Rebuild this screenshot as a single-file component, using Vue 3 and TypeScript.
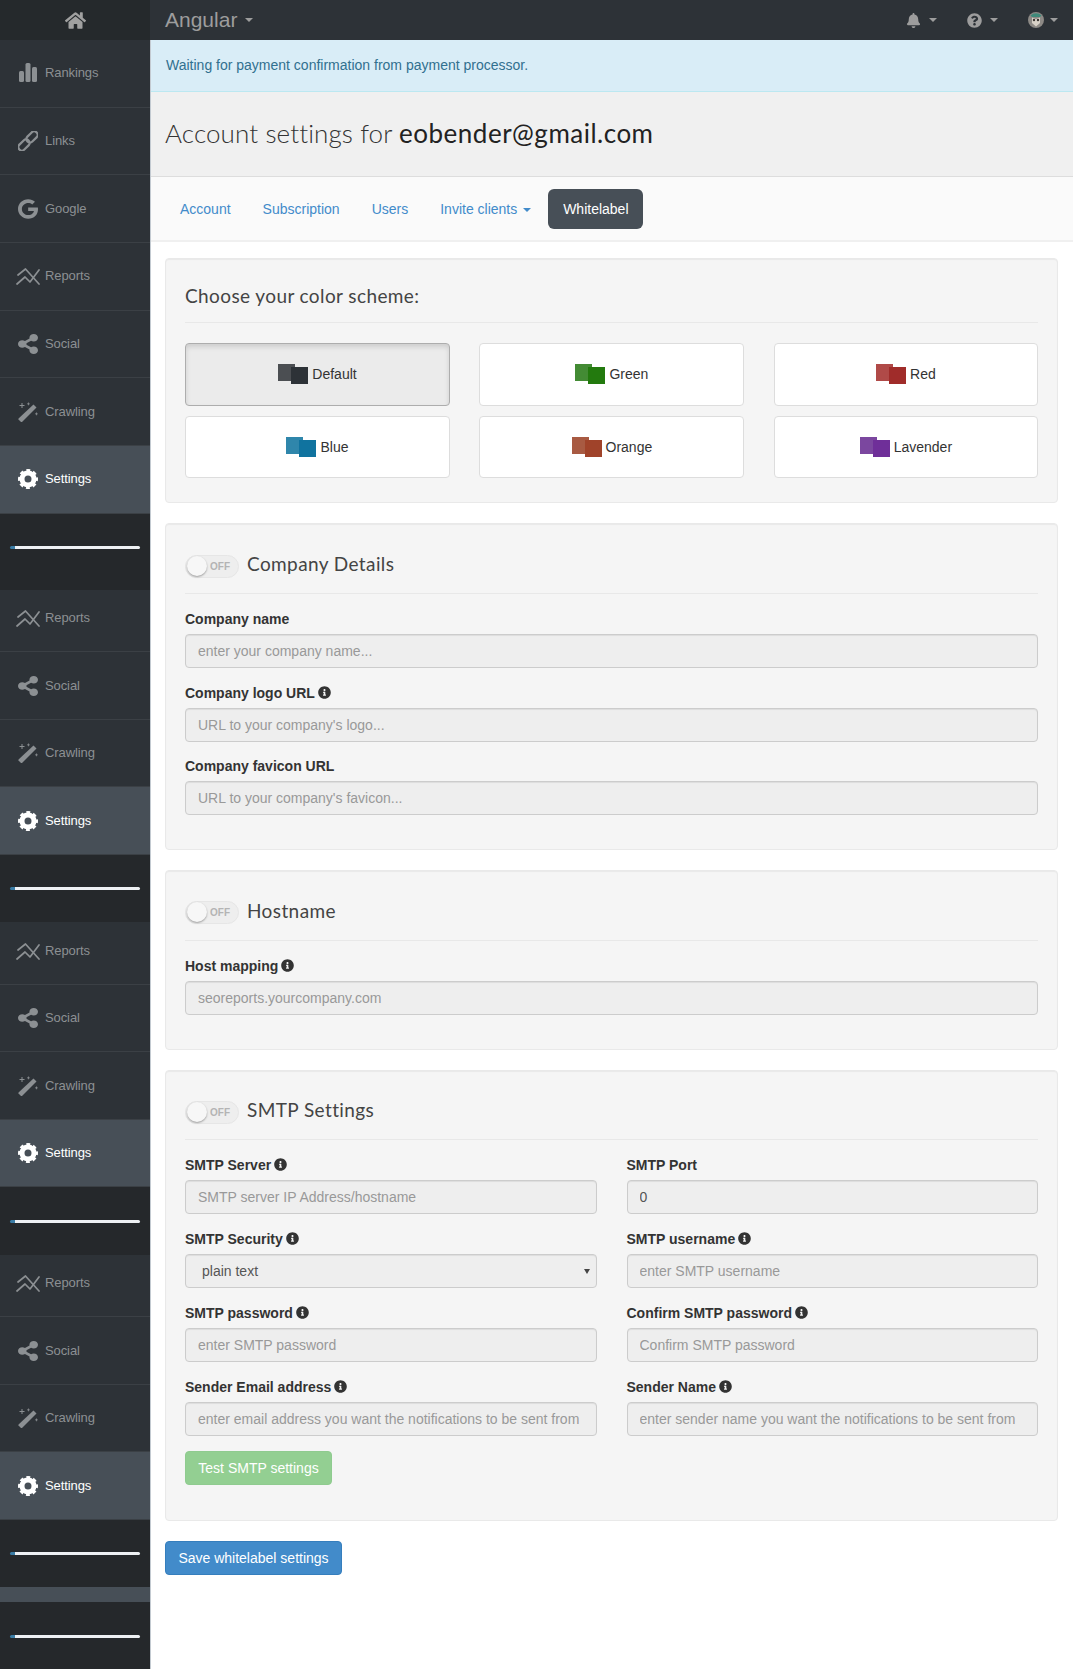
<script setup lang="ts">
const navTop = [
  { label: 'Rankings', icon: 'bars', h: 'tall' },
  { label: 'Links', icon: 'link', h: 'tall' },
  { label: 'Google', icon: 'google', h: 'tall' },
  { label: 'Reports', icon: 'reports', h: 'tall' },
]

// the sidebar repeats this block four times in the screenshot
const repeated = [
  { label: 'Reports', icon: 'reports', h: 'short' },
  { label: 'Social', icon: 'social', h: 'tall' },
  { label: 'Crawling', icon: 'wand', h: 'tall' },
  { label: 'Settings', icon: 'cog', h: 'tall' },
]

const tabs = ['Account', 'Subscription', 'Users']

const schemes = [
  { name: 'Default', a: '#4b4e52', b: '#2d3237', on: true },
  { name: 'Green', a: '#438b34', b: '#237a0e', on: false },
  { name: 'Red', a: '#b04a48', b: '#a02c2a', on: false },
  { name: 'Blue', a: '#2f86ab', b: '#10739f', on: false },
  { name: 'Orange', a: '#a85a42', b: '#a0432a', on: false },
  { name: 'Lavender', a: '#7b479f', b: '#6f2f99', on: false },
]

const company = [
  { label: 'Company name', ph: 'enter your company name...', info: false },
  { label: 'Company logo URL', ph: "URL to your company's logo...", info: true },
  { label: 'Company favicon URL', ph: "URL to your company's favicon...", info: false },
]

const smtp = [
  { label: 'SMTP Server', ph: 'SMTP server IP Address/hostname', info: true },
  { label: 'SMTP Port', val: '0', info: false },
  { label: 'SMTP Security', select: true, info: true },
  { label: 'SMTP username', ph: 'enter SMTP username', info: true },
  { label: 'SMTP password', ph: 'enter SMTP password', info: true },
  { label: 'Confirm SMTP password', ph: 'Confirm SMTP password', info: true },
  { label: 'Sender Email address', ph: 'enter email address you want the notifications to be sent from', info: true },
  { label: 'Sender Name', ph: 'enter sender name you want the notifications to be sent from', info: true },
]

const infoPath =
  'M256 8C119.043 8 8 119.083 8 256c0 136.997 111.043 248 248 248s248-111.003 248-248C504 119.083 392.957 8 256 8zm0 110c23.196 0 42 18.804 42 42s-18.804 42-42 42-42-18.804-42-42 18.804-42 42-42zm56 254c0 6.627-5.373 12-12 12h-88c-6.627 0-12-5.373-12-12v-24c0-6.627 5.373-12 12-12h12v-64h-12c-6.627 0-12-5.373-12-12v-24c0-6.627 5.373-12 12-12h64c6.627 0 12 5.373 12 12v100h12c6.627 0 12 5.373 12 12v24z'
</script>

<template>
  <div class="page">
    <header class="topbar">
      <div class="home">
        <svg class="home-icon" viewBox="0 0 576 512">
          <path fill="currentColor" d="M280.37 148.26L96 300.11V464a16 16 0 0 0 16 16l112.06-.29a16 16 0 0 0 15.92-16V368a16 16 0 0 1 16-16h64a16 16 0 0 1 16 16v95.64a16 16 0 0 0 16 16.05L464 480a16 16 0 0 0 16-16V300L295.67 148.26a12.19 12.19 0 0 0-15.3 0zM571.6 251.47L488 182.56V44.05a12 12 0 0 0-12-12h-56a12 12 0 0 0-12 12v72.61L318.47 43a48 48 0 0 0-61 0L4.34 251.47a12 12 0 0 0-1.6 16.9l25.5 31A12 12 0 0 0 45.15 301l235.22-193.74a12.19 12.19 0 0 1 15.3 0L530.9 301a12 12 0 0 0 16.9-1.6l25.5-31a12 12 0 0 0-1.7-16.93z" />
        </svg>
      </div>
      <div class="brand">Angular <i class="caret"></i></div>
      <div class="tools">
        <span class="tool">
          <svg class="tool-icon" viewBox="0 0 448 512"><path fill="currentColor" d="M224 512c35.32 0 63.97-28.65 63.97-64H160.03c0 35.35 28.65 64 63.97 64zm215.39-149.71c-19.32-20.76-55.47-51.99-55.47-154.29 0-77.7-54.48-139.9-127.94-155.16V32c0-17.67-14.32-32-31.98-32s-31.98 14.33-31.98 32v20.84C118.56 68.1 64.08 130.3 64.08 208c0 102.3-36.15 133.53-55.47 154.29-6 6.45-8.66 14.16-8.61 21.71.11 16.4 12.98 32 32.1 32h383.8c19.12 0 32-15.6 32.1-32 .05-7.55-2.61-15.27-8.61-21.71z" /></svg>
          <i class="caret"></i>
        </span>
        <span class="tool">
          <svg class="tool-icon" viewBox="0 0 512 512"><path fill="currentColor" d="M504 256c0 136.997-111.043 248-248 248S8 392.997 8 256C8 119.083 119.043 8 256 8s248 111.083 248 248zM262.655 90c-54.497 0-89.255 22.957-116.549 63.758-3.536 5.286-2.353 12.415 2.715 16.258l34.699 26.31c5.205 3.947 12.621 3.008 16.665-2.122 17.864-22.658 30.113-35.797 57.303-35.797 20.429 0 45.698 13.148 45.698 32.958 0 14.976-12.363 22.667-32.534 33.976C247.128 238.528 216 254.941 216 296v4c0 6.627 5.373 12 12 12h56c6.627 0 12-5.373 12-12v-1.333c0-28.462 83.186-29.647 83.186-106.667 0-58.002-60.165-102-116.531-102zM256 338c-25.365 0-46 20.635-46 46 0 25.364 20.635 46 46 46s46-20.636 46-46c0-25.365-20.635-46-46-46z" /></svg>
          <i class="caret"></i>
        </span>
        <span class="tool">
          <svg class="avatar" viewBox="0 0 16 16">
            <circle cx="8" cy="8" r="8" fill="#8d8a86" />
            <path d="M2.5 3.5a7.6 7.6 0 0 1 11 0L12 5H4z" fill="#3f8a7a" />
            <path d="M4 5.5 8 7l4-1.500V11l-4 3.500L4 11z" fill="#d8d2c8" />
            <circle cx="6" cy="8" r="1.200" fill="#3a3632" />
            <circle cx="10" cy="8" r="1.200" fill="#3a3632" />
          </svg>
          <i class="caret"></i>
        </span>
      </div>
    </header>

    <div class="body">
      <aside class="sidebar">
        <a v-for="item in navTop" :key="item.label" class="side-item first">
          <span class="side-icon">
            <svg v-if="item.icon === 'bars'" viewBox="0 0 20 20"><rect x="1" y="8" width="5" height="11" rx="1.500" fill="currentColor" /><rect x="7.500" y="0" width="5" height="19" rx="1.500" fill="currentColor" /><rect x="14" y="4" width="5" height="15" rx="1.500" fill="currentColor" /></svg>
            <svg v-else-if="item.icon === 'link'" viewBox="0 0 20 20" fill="none" stroke="currentColor" stroke-width="2.200"><rect x="-6.500" y="-3.500" width="13" height="7" rx="3.500" transform="translate(6 14) rotate(-45)" /><rect x="-6.500" y="-3.500" width="13" height="7" rx="3.500" transform="translate(14 6) rotate(-45)" /></svg>
            <svg v-else-if="item.icon === 'google'" viewBox="0 0 488 512" preserveAspectRatio="none"><path fill="currentColor" d="M488 261.800C488 403.300 391.100 504 248 504 110.800 504 0 393.200 0 256S110.800 8 248 8c66.800 0 123 24.500 166.300 64.900l-67.500 64.900C258.500 52.600 94.300 116.600 94.300 256c0 86.500 69.100 156.600 153.700 156.600 98.200 0 135-70.400 140.800-106.900H248v-85.300h236.100c2.300 12.700 3.900 24.900 3.900 41.400z" /></svg>
            <svg v-else class="wide" viewBox="0 0 24 18" fill="none" stroke="currentColor" stroke-width="1.700" stroke-linecap="round" stroke-linejoin="round"><path d="M2 8 9.500 2 23 17" /><path d="M1 17l8-7 5 5 9-12" /></svg>
          </span>
          {{ item.label }}
        </a>

        <template v-for="n in 4" :key="n">
          <a
            v-for="item in repeated"
            :key="item.label"
            class="side-item"
            :class="{ active: item.icon === 'cog', short: item.h === 'short', hide: n === 1 && item.label === 'Reports', first: n === 1 }"
          >
            <span class="side-icon">
              <svg v-if="item.icon === 'reports'" class="wide" viewBox="0 0 24 18" fill="none" stroke="currentColor" stroke-width="1.700" stroke-linecap="round" stroke-linejoin="round"><path d="M2 8 9.500 2 23 17" /><path d="M1 17l8-7 5 5 9-12" /></svg>
              <svg v-else-if="item.icon === 'social'" viewBox="0 0 448 512" preserveAspectRatio="none"><path fill="currentColor" d="M352 320c-22.608 0-43.387 7.819-59.790 20.895l-102.486-64.054a96.551 96.551 0 0 0 0-41.683l102.486-64.054C308.613 184.181 329.392 192 352 192c53.019 0 96-42.981 96-96S405.019 0 352 0s-96 42.981-96 96c0 7.158.79 14.130 2.276 20.841L155.790 180.895C139.387 167.819 118.608 160 96 160c-53.019 0-96 42.981-96 96s42.981 96 96 96c22.608 0 43.387-7.819 59.790-20.895l102.486 64.054A96.301 96.301 0 0 0 256 416c0 53.019 42.981 96 96 96s96-42.981 96-96-42.981-96-96-96z" /></svg>
              <svg v-else-if="item.icon === 'wand'" viewBox="0 0 20 20" fill="currentColor"><path d="M15.500 2.500 18.500 5.500 4 20H3L0.500 17.500V16.500z" /><path d="M3.500 1h1v2h2v1h-2v2h-1V4h-2V3h2zM10 0.500h.8v1h1v.8h-1v1H10v-1H9v-.8h1zM18 10.500h.8v1h1v.8h-1v1H18v-1h-1v-.8h1z" /></svg>
              <svg v-else viewBox="0 0 20 20" fill="none" stroke="currentColor"><circle cx="10" cy="10" r="6" stroke-width="5" /><circle cx="10" cy="10" r="8.600" stroke-width="2.800" stroke-dasharray="3.800 2.955" stroke-dashoffset="1.900" /></svg>
            </span>
            {{ item.label }}
          </a>
          <div class="side-slot"><span class="slot-bar"></span></div>
          <div v-if="n === 1" class="side-gap"></div>
        </template>
        <div class="side-stripe"></div>
        <div class="side-slot"><span class="slot-bar"></span></div>
      </aside>

      <main class="main">
        <div class="alert">Waiting for payment confirmation from payment processor.</div>
        <div class="title-bar">
          <h1>Account settings for <b>eobender@gmail.com</b></h1>
        </div>
        <nav class="tabs">
          <a v-for="t in tabs" :key="t" class="tab">{{ t }}</a>
          <a class="tab">Invite clients <i class="caret blue"></i></a>
          <a class="tab current">Whitelabel</a>
        </nav>

        <div class="content">
          <section class="panel">
            <h3 class="panel-head plain"><span class="head-text">Choose your color scheme:</span></h3>
            <div class="schemes">
              <button v-for="s in schemes" :key="s.name" type="button" class="scheme" :class="{ on: s.on }">
                <span class="swatch">
                  <i :style="{ background: s.a }"></i>
                  <i :style="{ background: s.b }"></i>
                </span>
                {{ s.name }}
              </button>
            </div>
          </section>

          <section class="panel tight">
            <h3 class="panel-head">
              <span class="toggle"><i class="knob"></i><em>OFF</em></span>
              <span class="head-text">Company Details</span>
            </h3>
            <div v-for="f in company" :key="f.label" class="group compact">
              <label>{{ f.label }}
                <svg v-if="f.info" class="info" viewBox="0 0 512 512"><path fill="currentColor" :d="infoPath" /></svg>
              </label>
              <input type="text" disabled :placeholder="f.ph" />
            </div>
          </section>

          <section class="panel">
            <h3 class="panel-head">
              <span class="toggle"><i class="knob"></i><em>OFF</em></span>
              <span class="head-text">Hostname</span>
            </h3>
            <div class="group">
              <label>Host mapping
                <svg class="info" viewBox="0 0 512 512"><path fill="currentColor" :d="infoPath" /></svg>
              </label>
              <input type="text" disabled placeholder="seoreports.yourcompany.com" />
            </div>
          </section>

          <section class="panel smtp">
            <h3 class="panel-head">
              <span class="toggle"><i class="knob"></i><em>OFF</em></span>
              <span class="head-text">SMTP Settings</span>
            </h3>
            <div class="smtp-grid">
              <div v-for="f in smtp" :key="f.label" class="group">
                <label>{{ f.label }}
                  <svg v-if="f.info" class="info" viewBox="0 0 512 512"><path fill="currentColor" :d="infoPath" /></svg>
                </label>
                <div v-if="f.select" class="select-wrap">
                  <select disabled><option>plain text</option></select>
                </div>
                <input v-else type="text" disabled :placeholder="f.ph" :value="f.val" />
              </div>
            </div>
            <div class="group">
              <button type="button" class="btn test" disabled>Test SMTP settings</button>
            </div>
          </section>

          <button type="button" class="btn save">Save whitelabel settings</button>
        </div>
      </main>
    </div>
  </div>
</template>

<style>
html,
body {
  margin: 0;
  background: #fff;
}
</style>

<style scoped>
.page {
  width: 1073px;
  height: 1669px;
  overflow: hidden;
  font-family: "Liberation Sans", Arial, sans-serif;
  font-size: 14px;
  line-height: 20px;
  color: #333;
  display: flex;
  flex-direction: column;
}

.topbar {
  flex: none;
  height: 40px;
  display: flex;
  align-items: center;
  background: #2d3237;
  color: #9d9d9d;
}
.home {
  width: 150px;
  height: 40px;
  display: flex;
  align-items: center;
  justify-content: center;
  background: #25292c;
}
.home-icon {
  width: 21px;
  height: 19px;
  color: #a0a0a0;
}
.brand {
  margin-left: 15px;
  font-size: 21px;
  display: flex;
  align-items: center;
  gap: 8px;
}
.caret {
  display: inline-block;
  width: 0;
  height: 0;
  border-top: 4px solid currentColor;
  border-left: 4px solid transparent;
  border-right: 4px solid transparent;
}
.caret.blue {
  color: #428bca;
  margin-left: 2px;
  vertical-align: 2px;
}
.tools {
  margin-left: auto;
  margin-right: 15px;
  display: flex;
  align-items: center;
  gap: 30px;
}
.tool {
  display: flex;
  align-items: center;
  gap: 8px;
}
.tool-icon {
  width: 15px;
  height: 15px;
}
.avatar {
  width: 16px;
  height: 16px;
  margin-right: -2px;
}

.body {
  flex: 1;
  display: flex;
  min-height: 0;
}
.sidebar {
  flex: none;
  width: 150px;
  border-right: 1px solid #c3cad1;
  background: #2d3237;
  overflow: hidden;
}
.side-item {
  height: 67.5px;
  box-sizing: border-box;
  display: flex;
  align-items: center;
  border-bottom: 1px solid #3b4045;
  color: #8c9093;
  font-size: 13px;
  letter-spacing: -0.1px;
}
.side-item.first {
  height: 67.7px;
}
.side-item.short {
  height: 62.5px;
  padding-bottom: 5px;
}
.side-item.hide {
  display: none;
}
.side-item.active {
  background: #474f57;
  color: #fff;
}
.side-icon {
  width: 45px;
  flex: none;
  display: flex;
  justify-content: center;
  padding-left: 10px;
  box-sizing: border-box;
}
.side-icon svg {
  width: 20px;
  height: 20px;
}
.side-icon svg.wide {
  width: 24px;
  height: 18px;
  margin-left: 0;
}
.side-slot {
  height: 67.500px;
  box-sizing: border-box;
  background: #25282b;
  display: flex;
  align-items: center;
  padding: 0 10px;
}
.side-gap {
  height: 8.600px;
  background: #25282b;
}
.side-stripe {
  height: 15px;
  background: #474f57;
}
.slot-bar {
  display: block;
  width: 100%;
  height: 3px;
  border-radius: 2px;
  background: linear-gradient(90deg, #3a7ca5 0, #3a7ca5 5px, #eef1f4 5px);
}

.main {
  flex: 1;
  min-width: 0;
}
.alert {
  height: 52px;
  box-sizing: border-box;
  padding: 15px;
  background: #d9edf7;
  border-bottom: 1px solid #bce8f1;
  color: #31708f;
}
.title-bar {
  height: 85px;
  box-sizing: border-box;
  padding: 0 0 2px 14px;
  display: flex;
  align-items: center;
  background: #f0f0f0;
  border-bottom: 1px solid #ddd;
}
h1 {
  margin: 0;
  font-family: Lato, sans-serif;
  font-size: 26px;
  font-weight: 300;
  letter-spacing: 0.1px;
  color: #333;
}
h1 b {
  font-weight: 400;
  letter-spacing: 0.5px;
  color: #222;
}
.tabs {
  height: 65px;
  box-sizing: border-box;
  padding: 12px 14px 0;
  display: flex;
  gap: 2px;
  background: #fafafa;
  border-bottom: 2px solid #f0f0f0;
}
.tab {
  height: 40px;
  box-sizing: border-box;
  padding: 10px 15px;
  color: #428bca;
  border-radius: 6px;
}
.tab.current {
  width: 95px;
  background: #474f57;
  color: #fff;
}

.content {
  padding: 16px 15px 0 14px;
}
.panel {
  box-sizing: border-box;
  padding: 19px;
  margin-bottom: 20px;
  background: #f5f5f5;
  border: 1px solid #e9e9e9;
  border-radius: 4px;
  box-shadow: inset 0 1px 1px rgba(0, 0, 0, 0.05);
}
.panel.tight {
  padding-bottom: 19px;
}
.panel.smtp {
  padding-bottom: 20px;
}
.panel-head {
  height: 51px;
  box-sizing: border-box;
  margin: 0 0 15px;
  padding-bottom: 4px;
  display: flex;
  align-items: center;
  gap: 8px;
  font-family: Lato, sans-serif;
  font-size: 19px;
  font-weight: 400;
  letter-spacing: 0.4px;
  color: #444;
  border-bottom: 1px solid #e8e8e8;
}
.panel.smtp .panel-head {
  height: 50px;
}
.head-text {
  margin-bottom: 4px;
}
.panel-head.plain {
  height: 45px;
  margin-bottom: 20px;
  padding-bottom: 5px;
}
.toggle {
  width: 54px;
  height: 23px;
  box-sizing: border-box;
  border: 1px solid #e6e6e6;
  border-radius: 12px;
  background: #eee;
  position: relative;
  flex: none;
}
.knob {
  position: absolute;
  left: 1px;
  top: 0;
  width: 20px;
  height: 20px;
  border-radius: 50%;
  background: #f7f7f7;
  box-shadow: 0 1px 2px rgba(0, 0, 0, 0.35);
}
.toggle em {
  position: absolute;
  left: 24px;
  top: 0;
  font: bold 10px/21px "Liberation Sans", sans-serif;
  font-style: normal;
  letter-spacing: 0;
  color: #b4b4b4;
}

.schemes {
  display: grid;
  grid-template-columns: 265px 265px 1fr;
  gap: 10px 29.4px;
  margin-bottom: 5px;
}
.scheme {
  height: 62.5px;
  display: flex;
  align-items: center;
  justify-content: center;
  gap: 4px;
  padding: 0;
  background: #fff;
  border: 1px solid #ddd;
  border-radius: 4px;
  font: inherit;
  color: #333;
}
.scheme.on {
  background: #ebebeb;
  border-color: #adadad;
  box-shadow: inset 0 3px 5px rgba(0, 0, 0, 0.125);
}
.swatch {
  width: 30px;
  height: 20px;
  position: relative;
  flex: none;
}
.swatch i {
  position: absolute;
  width: 17px;
  height: 17px;
  left: 0;
  top: 0;
}
.swatch i + i {
  left: 13px;
  top: 3px;
}

.group {
  margin-bottom: 15px;
}
.group.compact {
  margin-bottom: 14.500px;
}
.group label {
  display: block;
  height: 20px;
  margin-bottom: 5px;
  font-weight: bold;
  color: #333;
}
.info {
  width: 13px;
  height: 13px;
  margin-left: -1px;
  vertical-align: -1px;
}
.group input,
.group select {
  display: block;
  width: 100%;
  height: 34px;
  box-sizing: border-box;
  padding: 6px 12px;
  font: inherit;
  color: #555;
  background: #eee;
  border: 1px solid #ccc;
  border-radius: 4px;
  box-shadow: inset 0 1px 1px rgba(0, 0, 0, 0.075);
  opacity: 1;
}
.group input::placeholder {
  color: #999;
  opacity: 1;
}
.group select {
  appearance: none;
  padding-left: 16px;
}
.select-wrap {
  position: relative;
}
.select-wrap::after {
  content: "";
  position: absolute;
  right: 7px;
  top: 15px;
  border-top: 5px solid #444;
  border-left: 3px solid transparent;
  border-right: 3px solid transparent;
}
.smtp-grid {
  display: grid;
  grid-template-columns: 1fr 1fr;
  column-gap: 30px;
}

.btn {
  height: 34px;
  padding: 0 12px;
  font: inherit;
  color: #fff;
  border: 1px solid transparent;
  border-radius: 4px;
}
.test {
  width: 147px;
  background: #93cf92;
  border-color: #8fcb8f;
}
.save {
  width: 177px;
  background: #428bca;
  border-color: #357ebd;
}
</style>
